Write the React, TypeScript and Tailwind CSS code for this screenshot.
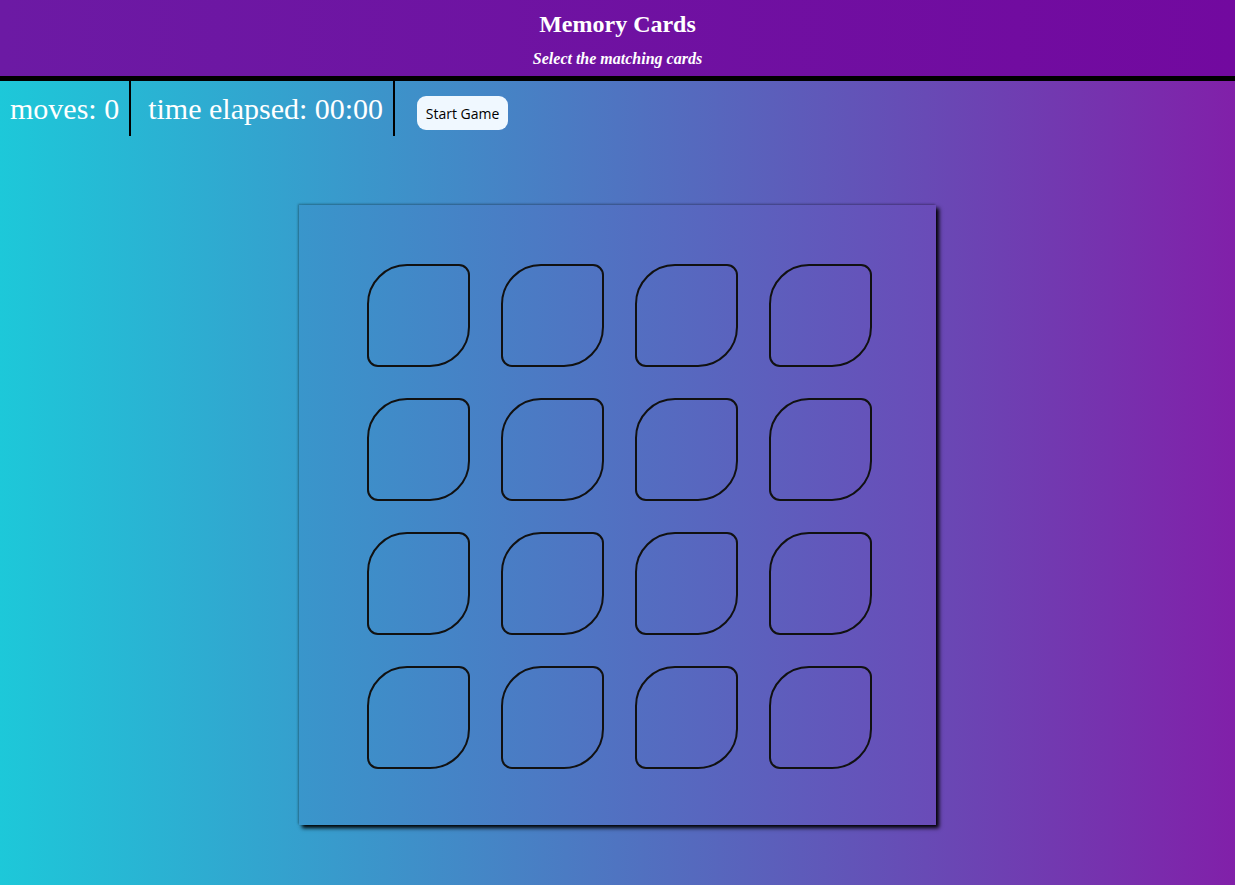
export default function App() {
  const cards = Array.from({ length: 16 }, (_, i) => i);

  return (
    <div className="min-h-[885px] bg-[linear-gradient(to_right,#1dc8d9,#8120a9)] font-['Liberation_Serif',serif] text-white">
      <header className="h-[81px] border-b-[5px] border-black bg-[linear-gradient(to_right,#6c1aa4,#72099f)] pt-[9px] text-center">
        <h1 className="text-[24px] font-bold leading-[30px]">Memory Cards</h1>
        <p className="mt-[10px] text-[16px] font-bold italic leading-[20px]">Select the matching cards</p>
      </header>

      <div className="flex h-[55px] items-stretch">
        <div className="flex items-center border-r-2 border-black pl-[10px] pr-[10px] text-[30px]">moves: 0</div>
        <div className="flex items-center border-r-2 border-black pl-[17px] pr-[10px] text-[30px]">time elapsed: 00:00</div>
        <div className="flex items-center pl-[22px] pt-[9px]">
          <button className="h-[34px] w-[91px] rounded-[9px] bg-[#f0f8ff] font-['Open_Sans',sans-serif] text-[14px] text-black">
            Start Game
          </button>
        </div>
      </div>

      <div className="flex justify-center pt-[69px]">
        <div className="grid h-[620px] w-[637px] grid-cols-[repeat(4,103px)] content-start gap-[31px] bg-[linear-gradient(to_right,#3996cb,#6a4bb8)] pt-[59px] pl-[68px] shadow-[3px_3px_4px_#000,-1px_-1px_2px_rgba(0,0,0,0.3)]">
          {cards.map((i) => (
            <div
              key={i}
              className="h-[103px] w-[103px] rounded-tl-[40px] rounded-tr-[11px] rounded-br-[40px] rounded-bl-[11px] border-2 border-[#111]"
            />
          ))}
        </div>
      </div>
    </div>
  );
}
